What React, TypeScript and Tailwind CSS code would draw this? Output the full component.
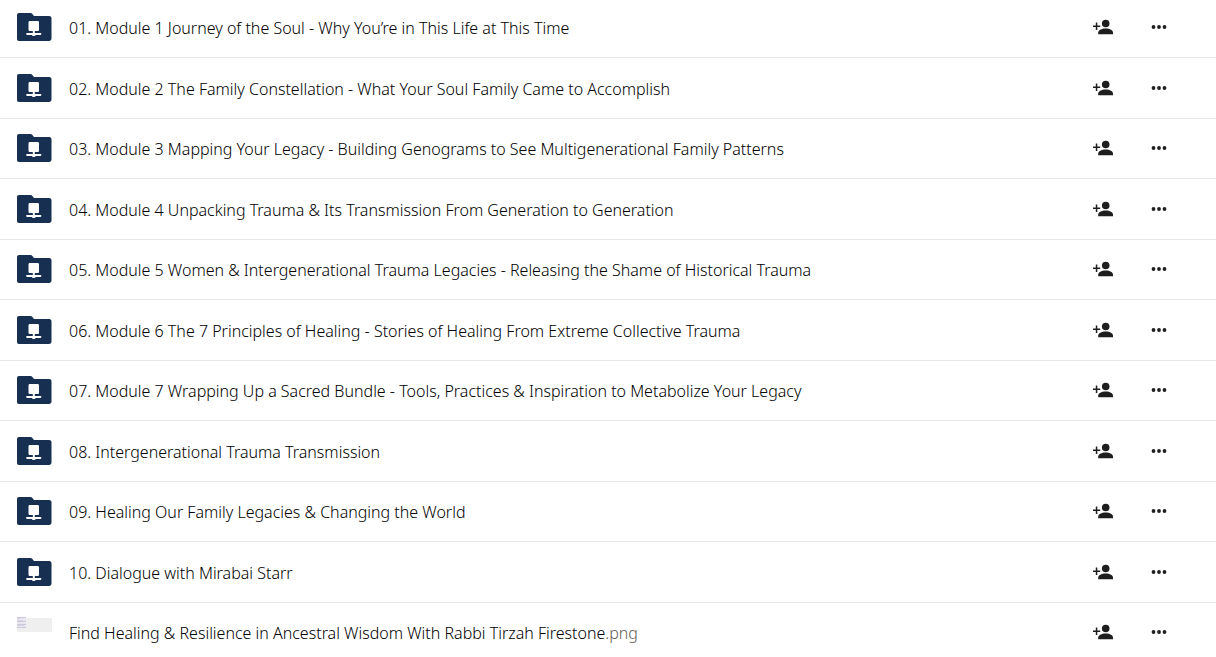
import React from 'react';

interface Entry {
  name: string;
  extension?: string;
}

const ENTRIES: Entry[] = [
  { name: '01. Module 1 Journey of the Soul - Why You’re in This Life at This Time' },
  { name: '02. Module 2 The Family Constellation - What Your Soul Family Came to Accomplish' },
  { name: '03. Module 3 Mapping Your Legacy - Building Genograms to See Multigenerational Family Patterns' },
  { name: '04. Module 4 Unpacking Trauma & Its Transmission From Generation to Generation' },
  { name: '05. Module 5 Women & Intergenerational Trauma Legacies - Releasing the Shame of Historical Trauma' },
  { name: '06. Module 6 The 7 Principles of Healing - Stories of Healing From Extreme Collective Trauma' },
  { name: '07. Module 7 Wrapping Up a Sacred Bundle - Tools, Practices & Inspiration to Metabolize Your Legacy' },
  { name: '08. Intergenerational Trauma Transmission' },
  { name: '09. Healing Our Family Legacies & Changing the World' },
  { name: '10. Dialogue with Mirabai Starr' },
  { name: 'Find Healing & Resilience in Ancestral Wisdom With Rabbi Tirzah Firestone', extension: '.png' },
];

function NetworkFolderIcon() {
  return (
    <svg width="35" height="28" viewBox="0 0 35 28" aria-hidden="true">
      <path
        d="M2 0H13.2C14.2 0 14.7.3 15.4 1.1L17 3H32.2C33.7 3 34.5 3.9 34.5 5.4V25.5C34.5 27 33.5 28 32 28H2C.7 28 0 27.2 0 26V2C0 .8.8 0 2 0Z"
        fill="#173052"
      />
      <path
        d="M13 8H20.5C21.5 8 22 8.5 22 9.5V16.5C22 17.5 21.5 18 20.5 18H17.8V20H23.4C24.8 20 24.8 21.9 23.4 21.9H18.6C18.5 23.2 15 23.2 14.9 21.9H10.1C8.7 21.9 8.7 20 10.1 20H15.8V18H13C12 18 11.5 17.5 11.5 16.5V9.5C11.5 8.5 12 8 13 8Z"
        fill="#fff"
      />
    </svg>
  );
}

// Scaled-down preview of the image file
function Thumbnail() {
  return (
    <svg width="35" height="30" viewBox="0 0 35 30" aria-hidden="true">
      <path d="M0 1H35V15H0Z" fill="#efeff0" />
      <path d="M0 0H9V11H0Z" fill="#eae8ee" />
      <path d="M0 .5H9M0 4.5H9M0 7.5H9M0 10.5H9" stroke="#cdc9dc" />
      <path d="M0 1.5H3M0 3.5H6M0 8.5H7" stroke="#d8d4e4" />
    </svg>
  );
}

function AddPersonIcon() {
  return (
    <svg width="20" height="16" viewBox="0 0 20 16" fill="#1f1e1e" aria-hidden="true">
      <circle cx="12.7" cy="4.5" r="3.8" />
      <path d="M5.2 15.3V13.7C5.2 11.2 8.4 9.5 12.7 9.5S20 11.2 20 13.7V15.3Z" />
      <path d="M2.8 3.6H4.3V6.5H7.2V8H4.3V10.9H2.8V8H0V6.5H2.8Z" />
    </svg>
  );
}

function MoreIcon() {
  return (
    <svg width="16" height="4" viewBox="0 0 16 4" fill="#1f1e1e" aria-hidden="true">
      <circle cx="2.5" cy="2" r="1.9" />
      <circle cx="8" cy="2" r="1.9" />
      <circle cx="13.5" cy="2" r="1.9" />
    </svg>
  );
}

function EntryRow({ name, extension }: Entry) {
  return (
    <li className="flex items-center border-b border-[#e9e9e9] pr-[49px] pb-px pl-[17px] odd:h-[60px] even:h-[61px] last:border-transparent">
      {extension ? <Thumbnail /> : <NetworkFolderIcon />}
      <a href="#" className="ml-[17px] min-w-0 flex-1 truncate pt-0.5 text-[16px] leading-6 font-light text-black">
        {name}
        {extension && <span className="text-[#605a54]">{extension}</span>}
      </a>
      <button type="button" aria-label={`Share ${name}`} className="shrink-0">
        <AddPersonIcon />
      </button>
      <button type="button" aria-label={`More actions for ${name}`} className="ml-[38px] shrink-0">
        <MoreIcon />
      </button>
    </li>
  );
}

export default function App() {
  return (
    <main className="overflow-hidden bg-white font-['Noto_Sans','Open_Sans',sans-serif]">
      <ul className="-mt-0.5">
        {ENTRIES.map((entry) => (
          <EntryRow key={entry.name} {...entry} />
        ))}
      </ul>
    </main>
  );
}
